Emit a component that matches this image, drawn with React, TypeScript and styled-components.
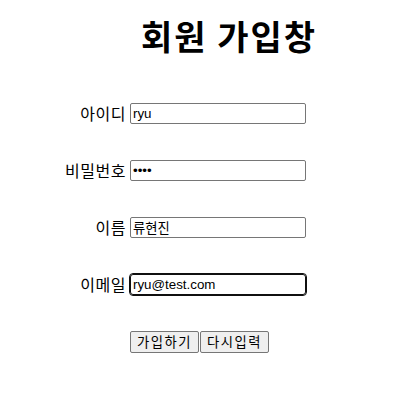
import React from "react";
import styled, { createGlobalStyle } from "styled-components";

const GlobalStyle = createGlobalStyle`
  body {
    margin: 0;
    background: #ffffff;
    font-family: "Noto Sans CJK KR", "Noto Sans", sans-serif;
  }
`;

const Page = styled.div`
  width: 407px;
  height: 413px;
  padding-top: 13px;
  box-sizing: border-box;
`;

const Title = styled.h1`
  margin: 0 0 44px 0;
  padding-left: 51px;
  text-align: center;
  font-size: 34px;
  line-height: 46px;
  letter-spacing: 2px;
  font-weight: 700;
  color: #000;
  font-family: "Noto Sans CJK KR", sans-serif;
`;

const Form = styled.form`
  display: grid;
  grid-template-columns: 62px 176px;
  column-gap: 4px;
  row-gap: 36px;
  margin-left: 64px;
  align-items: center;
`;

const Label = styled.label`
  text-align: right;
  font-size: 16px;
  line-height: 21px;
  letter-spacing: 0.5px;
  color: #000;
  white-space: nowrap;
`;

const Field = styled.input<{ $focused?: boolean }>`
  box-sizing: border-box;
  width: 176px;
  height: 21px;
  margin: 0;
  padding: 1px 2px;
  font-size: 13.33px;
  font-family: "Liberation Sans", "Noto Sans CJK KR", sans-serif;
  color: #000;
  border: 1px solid #767676;
  border-radius: ${(p) => (p.$focused ? "3px" : "2px")};
  outline: ${(p) => (p.$focused ? "1px solid #101010" : "none")};
  ${(p) => p.$focused && "border-color: #101010;"}
`;

const Buttons = styled.div`
  grid-column: 2;
  display: flex;
  gap: 1px;
`;

const Button = styled.button`
  height: 22px;
  padding: 0 6px;
  font-size: 13.33px;
  letter-spacing: 1.5px;
  font-family: "Noto Sans CJK KR", sans-serif;
  color: #000;
  background: #efefef;
  border: 1px solid #767676;
  border-radius: 2px;
  line-height: 18px;
`;

export default function App() {
  return (
    <Page>
      <GlobalStyle />
      <Title>회원 가입창</Title>
      <Form onSubmit={(e) => e.preventDefault()}>
        <Label>아이디</Label>
        <Field type="text" defaultValue="ryu" />
        <Label>비밀번호</Label>
        <Field type="password" defaultValue="1234" />
        <Label>이름</Label>
        <Field type="text" defaultValue="류현진" />
        <Label>이메일</Label>
        <Field type="text" defaultValue="ryu@test.com" $focused />
        <Buttons>
          <Button type="submit">가입하기</Button>
          <Button type="reset">다시입력</Button>
        </Buttons>
      </Form>
    </Page>
  );
}
